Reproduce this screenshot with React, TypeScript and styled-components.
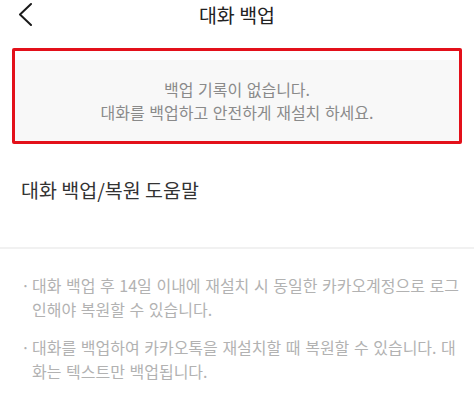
import styled, { createGlobalStyle } from 'styled-components';

const GlobalStyle = createGlobalStyle`
  html, body {
    margin: 0;
    padding: 0;
    background: #ffffff;
  }
  body {
    font-family: 'Noto Sans CJK KR', 'Noto Sans', sans-serif;
    -webkit-font-smoothing: antialiased;
  }
`;

const Screen = styled.div`
  width: 474px;
  height: 402px;
  overflow: hidden;
  display: flex;
  flex-direction: column;
`;

const TopBar = styled.header`
  position: relative;
  height: 30px;
  display: flex;
  align-items: center;
  justify-content: center;
`;

const BackButton = styled.button`
  position: absolute;
  left: 14px;
  top: 0;
  width: 24px;
  height: 28px;
  padding: 0;
  border: 0;
  background: none;
  display: flex;
  align-items: center;
  justify-content: center;
`;

const Title = styled.h1`
  margin: 0;
  font-size: 19.5px;
  font-weight: 400;
  color: #222222;
  line-height: 30px;
`;

const Highlight = styled.section`
  margin: 18px 12px 0;
  height: 96px;
  box-sizing: border-box;
  border: 3px solid #e3101a;
  border-radius: 2px;
  padding-top: 9px;
  display: flex;
`;

const EmptyPanel = styled.div`
  flex: 1;
  background: #f8f8f8;
  display: flex;
  flex-direction: column;
  align-items: center;
  justify-content: center;
  font-size: 16px;
  line-height: 23px;
  word-spacing: 1px;
  color: #8a8a8a;
`;

const HelpRow = styled.div`
  height: 105px;
  box-sizing: border-box;
  padding: 32px 21px 0;
  font-size: 19.5px;
  line-height: 28px;
  color: #333333;
  border-bottom: 2px solid #f1f1f1;
`;

const Notes = styled.ul`
  list-style: none;
  margin: 0;
  padding: 24px 14px 0 32px;
  display: flex;
  flex-direction: column;
  gap: 14px;
`;

const Note = styled.li`
  position: relative;
  font-size: 16px;
  line-height: 24px;
  word-spacing: 1px;
  color: #b2b2b2;

  &::before {
    content: '·';
    position: absolute;
    left: -11px;
    top: 0;
  }
`;

const ChevronLeft = () => (
  <svg width="16" height="24" viewBox="0 0 16 24" fill="none">
    <polyline
      points="13,2 2,12.5 13,23"
      stroke="#1a1a1a"
      strokeWidth="2"
      strokeLinecap="round"
      strokeLinejoin="round"
    />
  </svg>
);

const App = () => {
  return (
    <Screen>
      <GlobalStyle />
      <TopBar>
        <BackButton aria-label="뒤로">
          <ChevronLeft />
        </BackButton>
        <Title>대화 백업</Title>
      </TopBar>
      <Highlight>
        <EmptyPanel>
          <div>백업 기록이 없습니다.</div>
          <div>대화를 백업하고 안전하게 재설치 하세요.</div>
        </EmptyPanel>
      </Highlight>
      <HelpRow>대화 백업/복원 도움말</HelpRow>
      <Notes>
        <Note>
          대화 백업 후 14일 이내에 재설치 시 동일한 카카오계정으로 로그인해야
          복원할 수 있습니다.
        </Note>
        <Note>
          대화를 백업하여 카카오톡을 재설치할 때 복원할 수 있습니다. 대화는
          텍스트만 백업됩니다.
        </Note>
      </Notes>
    </Screen>
  );
};

export default App;
